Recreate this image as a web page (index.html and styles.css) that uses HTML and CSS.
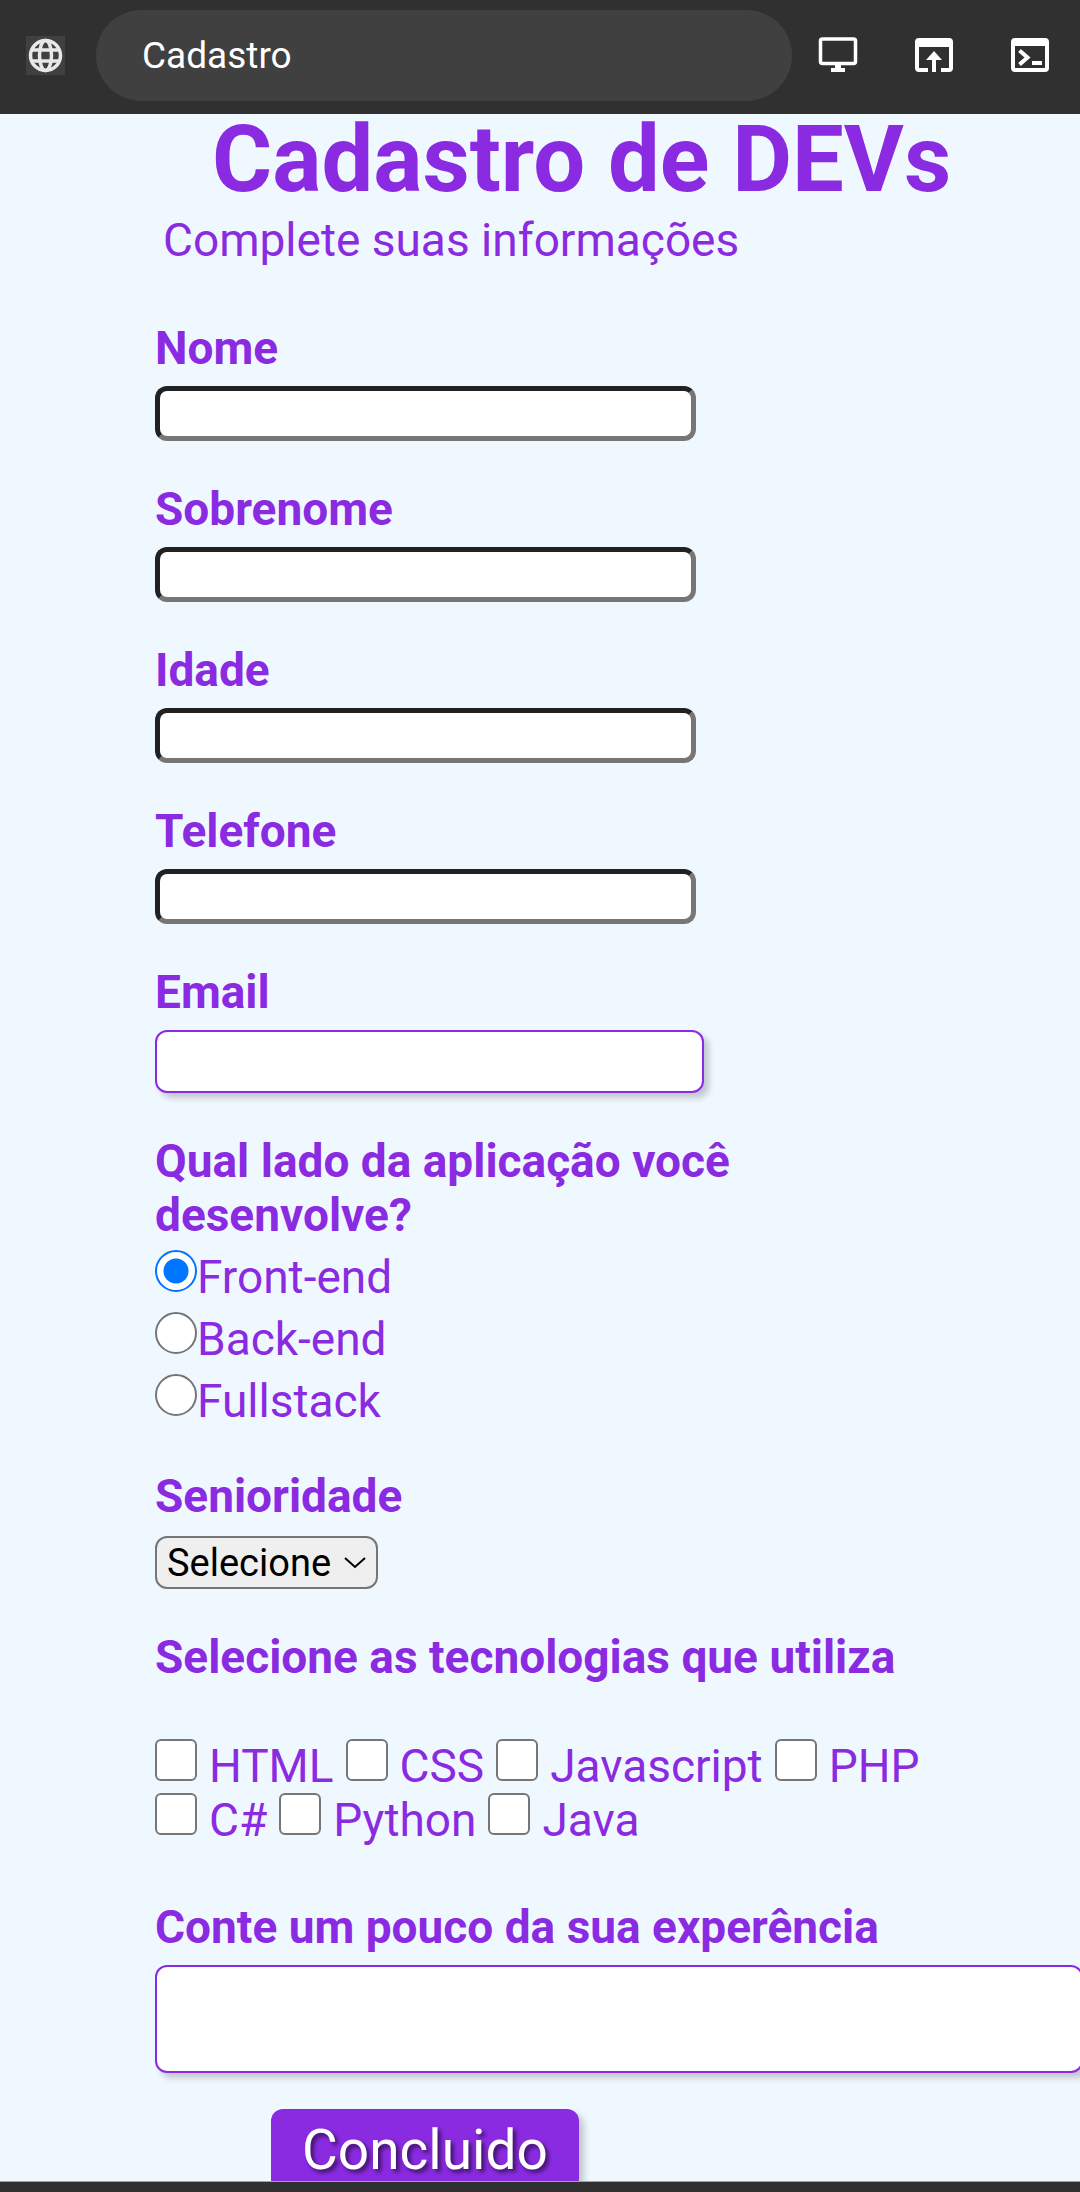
FILE: index.html
```html
<!DOCTYPE html>
<html lang="pt-BR">
<head>
<meta charset="utf-8">
<meta name="viewport" content="width=device-width, initial-scale=1">
<title>Cadastro</title>
<link rel="stylesheet" href="styles.css">
</head>
<body>
<header class="toolbar">
  <svg class="globe" viewBox="0 0 39 39" aria-hidden="true">
    <rect width="39" height="39" fill="#404040"/>
    <g fill="none" stroke="#e8e8e8" stroke-width="3.500">
      <circle cx="19.500" cy="19.500" r="15"/>
      <ellipse cx="19.500" cy="19.500" rx="6" ry="15"/>
      <path d="M6 14H33M6 25H33"/>
    </g>
  </svg>
  <div class="address">Cadastro</div>
  <nav class="actions">
    <button class="action" type="button" aria-label="Versão para computador">
      <svg viewBox="0 0 40 40"><rect x="2.500" y="4" width="35" height="24.500" rx="2" fill="none" stroke="#fff" stroke-width="3.500"/><path fill="#fff" d="M17 29h6v4h4v4H13v-4h4z"/></svg>
    </button>
    <button class="action" type="button" aria-label="Abrir no navegador">
      <svg viewBox="0 0 40 40"><path fill="#fff" d="M5 3h30q4 0 4 4v26q0 4-4 4h-8v-4h8V12H5v21h9v4H5q-4 0-4-4V7q0-4 4-4zM20 16l8 9h-6v12h-4V25h-6z"/></svg>
    </button>
    <button class="action" type="button" aria-label="Console">
      <svg viewBox="0 0 40 40"><path fill="#fff" fill-rule="evenodd" d="M5 3h30q4 0 4 4v26q0 4-4 4H5q-4 0-4-4V7q0-4 4-4zM5 11v22h30V11z"/><path fill="none" stroke="#fff" stroke-width="4" d="M9.500 15.500l8 7-8 7M22 28h10"/></svg>
    </button>
  </nav>
</header>
<main class="page">
  <h1 class="title">Cadastro de DEVs</h1>
  <p class="subtitle">Complete suas informações</p>
  <form class="form">
    <div class="field">
      <label class="label" for="nome">Nome</label>
      <input class="input" type="text" id="nome">
    </div>
    <div class="field">
      <label class="label" for="sobrenome">Sobrenome</label>
      <input class="input" type="text" id="sobrenome">
    </div>
    <div class="field">
      <label class="label" for="idade">Idade</label>
      <input class="input" type="text" id="idade">
    </div>
    <div class="field">
      <label class="label" for="telefone">Telefone</label>
      <input class="input" type="text" id="telefone">
    </div>
    <div class="field">
      <label class="label" for="email">Email</label>
      <input class="input input-email" type="email" id="email">
    </div>
    <fieldset class="group">
      <legend class="label legend-side">Qual lado da aplicação você desenvolve?</legend>
      <label class="radio-row"><input class="radio" type="radio" name="lado" checked>Front-end</label>
      <label class="radio-row"><input class="radio" type="radio" name="lado">Back-end</label>
      <label class="radio-row"><input class="radio" type="radio" name="lado">Fullstack</label>
    </fieldset>
    <div class="field">
      <label class="label" for="senioridade">Senioridade</label>
      <div class="select-wrap">
        <select class="select" id="senioridade">
          <option>Selecione</option>
          <option>Júnior</option>
          <option>Pleno</option>
          <option>Sênior</option>
        </select>
        <svg class="chevron" viewBox="0 0 22 12" aria-hidden="true"><path d="M1 1l10 9 10-9" fill="none" stroke="#000" stroke-width="2"/></svg>
      </div>
    </div>
    <fieldset class="group">
      <legend class="label">Selecione as tecnologias que utiliza</legend>
      <div class="techs">
        <label class="tech"><input class="check" type="checkbox">HTML</label>
        <label class="tech"><input class="check" type="checkbox">CSS</label>
        <label class="tech"><input class="check" type="checkbox">Javascript</label>
        <label class="tech"><input class="check" type="checkbox">PHP</label>
        <label class="tech"><input class="check" type="checkbox">C#</label>
        <label class="tech"><input class="check" type="checkbox">Python</label>
        <label class="tech"><input class="check" type="checkbox">Java</label>
      </div>
    </fieldset>
    <div class="field field-story">
      <label class="label" for="experiencia">Conte um pouco da sua experência</label>
      <textarea class="textarea" id="experiencia"></textarea>
    </div>
    <button class="submit" type="submit">Concluido</button>
  </form>
</main>
<footer class="bottom-bar"></footer>
</body>
</html>
```
FILE: styles.css
```css
* {
  box-sizing: border-box;
}

body {
  display: flex;
  flex-direction: column;
  height: 100vh;
  margin: 0;
  overflow: hidden;
  background: aliceblue;
  color: blueviolet;
  font-family: Roboto, sans-serif;
  font-size: 46px;
  line-height: 54px;
}

.toolbar {
  display: flex;
  flex: none;
  align-items: center;
  height: 114px;
  padding: 0 30px 4px 26px;
  background: #303030;
}

.globe {
  flex: none;
  width: 39px;
  height: 39px;
  margin-right: 31px;
}

.address {
  flex: 1;
  padding: 0 46px;
  border-radius: 46px;
  background: #404040;
  color: #fff;
  font-size: 37px;
  line-height: 91px;
}

.actions {
  display: flex;
  gap: 56px;
  margin-left: 26px;
}

.action {
  width: 40px;
  height: 40px;
  padding: 0;
  border: 0;
  background: none;
}

.action svg {
  display: block;
}

.page {
  flex: 1;
  min-height: 0;
}

.title {
  margin: 0 0 7px;
  padding-left: 212px;
  font-size: 92px;
  line-height: 92px;
}

.subtitle {
  margin: 0 0 54px;
  padding-left: 163px;
}

.form {
  display: flex;
  flex-direction: column;
  align-items: flex-start;
  gap: 41px;
  padding-left: 155px;
}

.field {
  display: flex;
  flex-direction: column;
  align-items: flex-start;
  gap: 11px;
}

.label {
  padding: 0;
  font-weight: 700;
}

.input {
  width: 541px;
  height: 55px;
  padding: 0 6px;
  border: 5px solid;
  border-color: #212121 #767676 #767676 #212121;
  border-radius: 12px;
  background: #fff;
  font: 38px Roboto, sans-serif;
}

.input-email {
  width: 549px;
  height: 63px;
  border: 2px solid blueviolet;
  box-shadow: 5px 5px 6px rgba(0, 0, 0, 0.2);
}

.group {
  min-width: 0;
  margin: 0;
  padding: 0;
  border: 0;
}

.legend-side {
  max-width: 620px;
}

.radio-row {
  display: flex;
  padding-top: 8px;
}

.radio,
.check {
  flex: none;
  appearance: none;
  width: 42px;
  height: 42px;
  margin: 0;
  border: 2px solid #767676;
  background: #fff;
}

.radio {
  border-radius: 50%;
}

.radio:checked {
  border-color: #0075ff;
  background: radial-gradient(circle, #0075ff 12px, #fff 13px);
}

.check {
  border-radius: 6px;
}

.select-wrap {
  display: grid;
  align-items: center;
  padding-top: 2px;
}

.select {
  grid-area: 1 / 1;
  appearance: none;
  width: 223px;
  height: 53px;
  padding: 0 0 0 10px;
  border: 2px solid #767676;
  border-radius: 12px;
  background: #efefef;
  color: #000;
  font: 38px Roboto, sans-serif;
}

.chevron {
  grid-area: 1 / 1;
  justify-self: end;
  width: 22px;
  height: 12px;
  margin-right: 12px;
  pointer-events: none;
}

.techs {
  display: flex;
  flex-wrap: wrap;
  column-gap: 12px;
  max-width: 820px;
  padding-top: 55px;
}

.tech {
  display: flex;
  gap: 12px;
}

.field-story {
  padding-top: 12px;
}

.textarea {
  width: 928px;
  height: 108px;
  padding: 6px;
  border: 2px solid blueviolet;
  border-radius: 12px;
  background: #fff;
  box-shadow: 5px 5px 6px rgba(0, 0, 0, 0.2);
  font: 38px Roboto, sans-serif;
  resize: none;
}

.submit {
  margin: -5px 0 0 116px;
  padding: 5px 31px;
  border: 0;
  border-radius: 12px;
  background: blueviolet;
  box-shadow: 5px 5px 6px rgba(0, 0, 0, 0.2);
  color: #fff;
  font: 55px/72px Roboto, sans-serif;
  text-shadow: 3px 3px 4px rgba(0, 0, 0, 0.6);
}

/* Stays above the form where the form runs past the window. */
.bottom-bar {
  position: relative;
  z-index: 1;
  flex: none;
  height: 11px;
  border-top: 1px solid #a0a2a6;
  background: #303030;
}
```
